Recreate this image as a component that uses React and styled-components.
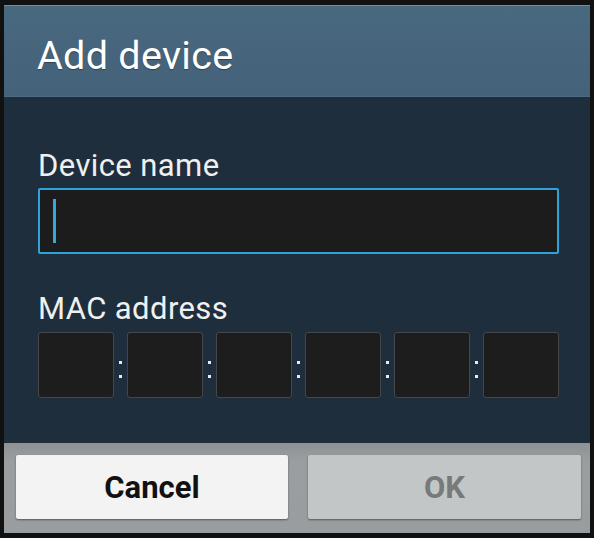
import React from 'react';
import styled, { createGlobalStyle } from 'styled-components';

const GlobalStyle = createGlobalStyle`
    html, body {
        margin: 0;
        padding: 0;
        background: #111111;
    }
    body {
        font-family: Roboto, 'Noto Sans', sans-serif;
    }
`;

const MAC_PARTS = 6;

const App = () => {
    return (
        <Screen>
            <GlobalStyle />
            <Dialog>
                <Header>
                    <Title>Add device</Title>
                </Header>
                <Body>
                    <Label>Device name</Label>
                    <NameInput>
                        <Caret />
                    </NameInput>
                    <Label spaced>MAC address</Label>
                    <MacRow>
                        {Array.from({ length: MAC_PARTS }).map((_, i) => (
                            <React.Fragment key={i}>
                                {i > 0 && (
                                    <Colon>
                                        <Dot />
                                        <Dot />
                                    </Colon>
                                )}
                                <MacBox />
                            </React.Fragment>
                        ))}
                    </MacRow>
                </Body>
                <Footer>
                    <Button>Cancel</Button>
                    <Button disabled>OK</Button>
                </Footer>
            </Dialog>
        </Screen>
    );
};

const Screen = styled.div`
    width: 594px;
    height: 538px;
    box-sizing: border-box;
    padding: 5px 4px 5px 4px;
`;

const Dialog = styled.div`
    display: flex;
    flex-direction: column;
    height: 528px;
`;

const Header = styled.div`
    height: 92px;
    box-sizing: border-box;
    display: flex;
    align-items: center;
    padding: 8px 0 0 33px;
    background: linear-gradient(to bottom, #49697f 0%, #44627a 100%);
    border-top: 1px solid #6f8ca2;
    border-bottom: 1px solid #4f6a80;
`;

const Title = styled.h1`
    margin: 0;
    font-size: 39.5px;
    font-weight: 400;
    color: #ffffff;
    letter-spacing: 0.3px;
    text-shadow: 0 1px 1px rgba(0, 0, 0, 0.35);
`;

const Body = styled.div`
    height: 346px;
    box-sizing: border-box;
    background: #1f2e3c;
    padding: 51px 31px 0 34px;
    display: flex;
    flex-direction: column;
`;

const Label = styled.div`
    font-size: 31px;
    line-height: 36px;
    letter-spacing: 0.4px;
    color: #f0f0f0;
    margin-top: ${props => (props.spaced ? '37px' : '0')};
    margin-bottom: 4px;
`;

const NameInput = styled.div`
    height: 66px;
    flex-shrink: 0;
    box-sizing: border-box;
    border: 2px solid #2fa3d9;
    border-radius: 2px;
    background: #1c1c1c;
    display: flex;
    align-items: center;
    padding-left: 13px;
`;

const Caret = styled.div`
    width: 3px;
    height: 44px;
    background: #36a6dc;
`;

const MacRow = styled.div`
    display: flex;
    align-items: center;
    margin-top: 1px;
`;

const MacBox = styled.div`
    width: 76px;
    height: 66px;
    flex-shrink: 0;
    box-sizing: border-box;
    border: 1px solid #44484c;
    border-radius: 3px;
    background: #1d1d1d;
`;

const Colon = styled.div`
    width: 13px;
    display: flex;
    flex-direction: column;
    align-items: center;
    gap: 11px;
    padding-top: 8px;
`;

const Dot = styled.div`
    width: 3px;
    height: 3px;
    background: #e8ecef;
`;

const Footer = styled.div`
    height: 90px;
    box-sizing: border-box;
    background: linear-gradient(to bottom, #8f9294 0%, #9b9ea0 20%, #9a9d9f 100%);
    padding: 12px 9px 14px 12px;
    display: grid;
    grid-template-columns: 272px 273px;
    column-gap: 20px;
`;

const Button = styled.button`
    margin: 0;
    border: none;
    border-radius: 2px;
    font-family: Roboto, 'Noto Sans', sans-serif;
    font-size: 31px;
    font-weight: 700;
    background: ${props => (props.disabled ? '#c3c6c7' : '#f3f3f3')};
    color: ${props => (props.disabled ? '#77797a' : '#111111')};
    box-shadow: 0 1px 2px rgba(0, 0, 0, 0.45);
    padding: 0;
    cursor: ${props => (props.disabled ? 'default' : 'pointer')};
`;

export default App;
